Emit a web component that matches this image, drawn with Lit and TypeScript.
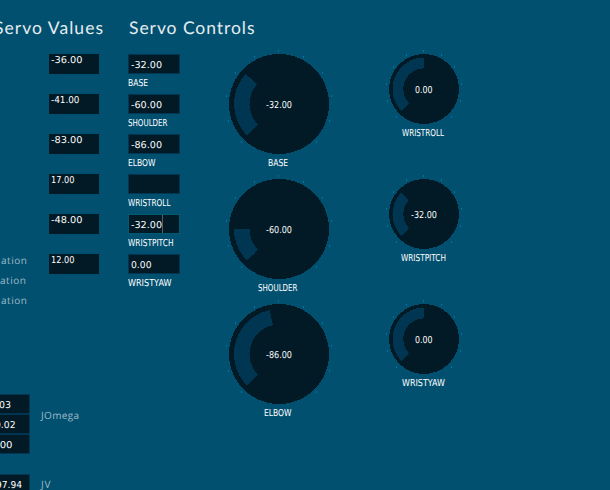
import { LitElement, html, css, svg } from "lit";
import { customElement, property } from "lit/decorators.js";

// A caption whose ink is fitted to a known width, like a fixed bitmap face.
@customElement("pixel-text")
class PixelText extends LitElement {
  @property() text = "";
  @property({ type: Number }) w = 20;
  @property() kind = "number";
  static styles = css`
    :host { display: block; height: 9px; flex: none; }
    svg { display: block; overflow: visible; height: 9px; }
    text { fill: #fff; font-family: "DejaVu Sans", sans-serif; font-size: 9.5px; text-rendering: geometricPrecision; }
    .caption { font-size: 9.6px; }
    .dialnum { font-size: 9.6px; }
    .title { fill: #e4edf1; font-family: Lato, sans-serif; font-size: 17.5px; }
    .note { fill: #9dbac7; font-family: "Open Sans", sans-serif; font-size: 10px; }
  `;
  render() {
    const glyphs = this.kind === "title" || this.kind === "note" ? "spacing" : "spacingAndGlyphs";
    return html`<svg width=${this.w} height="9">
      <text class=${this.kind} x="0" y="8" textLength=${this.w} lengthAdjust=${glyphs}>${this.text}</text>
    </svg>`;
  }
}

@customElement("servo-knob")
class ServoKnob extends LitElement {
  @property({ type: Number }) size = 100;
  @property({ type: Number }) value = 0;
  @property({ type: Number }) stop = 270;
  @property() label = "";
  @property({ type: Number }) lw = 20;
  static styles = css`
    :host { display: flex; flex-direction: column; align-items: center; height: 125px; }
    .dial { display: grid; place-items: center; flex: none; }
    .dial > * { grid-area: 1 / 1; }
    .dial svg { display: block; overflow: visible; }
    .face { fill: #021a25; }
    .arc { fill: #003652; }
    .tick { fill: #0572a0; }
    .value { margin: 0 1px 0 0; }
    .name { margin: 4px 2px 0 0; }
  `;
  render() {
    const r = this.size / 2;
    const point = (radius: number, deg: number) => {
      const a = (deg * Math.PI) / 180;
      return [r + radius * Math.cos(a), r + radius * Math.sin(a)];
    };
    const o = r * 0.9, i = r * 0.59;
    const d = `M${point(o, 135)} A${o} ${o} 0 0 1 ${point(o, this.stop)} L${point(i, this.stop)} A${i} ${i} 0 0 0 ${point(i, 135)}Z`;
    return html`
      <div class="dial">
        <svg width=${this.size} height=${this.size} shape-rendering="crispEdges">
          ${Array.from({ length: 11 }, (_, n) => {
            const [x, y] = point(r + 3.3, 135 + n * 27);
            return svg`<rect class="tick" x=${Math.round(x - 0.5)} y=${Math.round(y - 0.5)} width="1" height="2"/>`;
          })}
          <circle class="face" cx=${r} cy=${r} r=${r}/>
          <path class="arc" d=${d}/>
        </svg>
        <pixel-text class="value" kind="dialnum" text=${this.value.toFixed(2)} w=${this.value < 0 ? 26 : 17.5}></pixel-text>
      </div>
      <pixel-text class="name" kind="caption" text=${this.label} w=${this.lw}></pixel-text>`;
  }
}

@customElement("app-root")
class AppRoot extends LitElement {
  static styles = css`
    :host { display: block; width: 610px; height: 490px; overflow: hidden; background: #02506f; }
    .page { display: grid; grid-template-columns: 49px 79px 101px 155px 226px; height: 490px; overflow: hidden; }
    .side { padding-top: 256px; box-sizing: border-box; width: 100px; }
    .hint { height: 20px; padding-left: 1px; }
    .hint.b { padding-left: 0; }
    .group { display: flex; align-items: flex-start; gap: 11px; }
    .omega { margin-top: 78px; }
    .jv { margin-top: 20px; }
    .note { margin-top: 17px; }
    .jv .note { margin-top: 6px; }
    .out { box-sizing: border-box; width: 29.5px; height: 20px; border: 1px solid #003652; border-left: 0; background: #021a25; display: flex; justify-content: flex-end; padding-top: 5px; }
    .p19 { padding-right: 18px; } .p14 { padding-right: 13px; }
    .p17 { padding-right: 16px; } .p8 { padding-right: 7px; }
    .title { height: 54px; box-sizing: border-box; padding-top: 26px; }
    .title.v { margin-left: -55px; }
    .title.c { margin-left: 0.5px; }
    .read { width: 50px; height: 20px; margin-bottom: 20px; background: #021a25; padding: 1px 0 0 1.5px; box-sizing: border-box; }
    .cell { height: 40px; }
    .field { width: 52px; height: 20px; box-sizing: border-box; border: 1px solid #003652; background: #021a25; padding: 5px 0 0 1.5px; display: flex; }
    .field.on { border-color: #005a74; }
    .caret { width: 1px; height: 18px; margin: -5px 0 0 0.5px; background: #535f65; }
    .tag { margin: 4px 0 0 0; }
    .knobs { padding-top: 54px; }
    .big { width: 100px; }
    .small { width: 80px; }
  `;
  render() {
    const reads: [string, number][] = [["-36.00", 31.5], ["-41.00", 28.5], ["-83.00", 31.5], ["17.00", 23.5], ["-48.00", 31.5], ["12.00", 23.5]];
    const fields: [string, number, string, number][] = [
      ["-32.00", 31, "BASE", 20], ["-60.00", 31, "SHOULDER", 39.5], ["-86.00", 31, "ELBOW", 27.5],
      ["", 0, "WRISTROLL", 42.5], ["-32.00", 31, "WRISTPITCH", 45.5], ["0.00", 20.5, "WRISTYAW", 43.5],
    ];
    const out = (t: string, w: number, c: string) => html`<div class="out ${c}"><pixel-text text=${t} w=${w}></pixel-text></div>`;
    return html`<div class="page">
      <div class="side">
        <pixel-text class="hint" kind="note" text="ation" w="26"></pixel-text>
        <pixel-text class="hint b" kind="note" text="ation" w="26"></pixel-text>
        <pixel-text class="hint" kind="note" text="ation" w="26"></pixel-text>
        <div class="group omega">
          <div>${out("0.03", 21, "p19")}${out("0.02", 20.5, "p14")}${out("0.00", 22.5, "p17")}</div>
          <pixel-text class="note" kind="note" text="JOmega" w="38"></pixel-text>
        </div>
        <div class="group jv">
          ${out("97.94", 26, "p8")}
          <pixel-text class="note" kind="note" text="JV" w="9.5"></pixel-text>
        </div>
      </div>
      <div>
        <div class="title v"><pixel-text kind="title" text="Servo Values" w="109"></pixel-text></div>
        ${reads.map(([t, w]) => html`<div class="read"><pixel-text text=${t} w=${w}></pixel-text></div>`)}
      </div>
      <div>
        <div class="title c"><pixel-text kind="title" text="Servo Controls" w="125.5"></pixel-text></div>
        ${fields.map(([t, w, l, lw], n) => html`<div class="cell">
          <div class="field ${n === 4 ? "on" : ""}">
            ${t ? html`<pixel-text text=${t} w=${w}></pixel-text>` : ""}
            ${n === 4 ? html`<div class="caret"></div>` : ""}
          </div>
          <pixel-text class="tag" kind="caption" text=${l} w=${lw}></pixel-text>
        </div>`)}
      </div>
      <div class="knobs big">
        <servo-knob size="100" value="-32" stop="222" label="BASE" lw="20"></servo-knob>
        <servo-knob size="100" value="-60" stop="180" label="SHOULDER" lw="39.5"></servo-knob>
        <servo-knob size="100" value="-86" stop="258" label="ELBOW" lw="27.5"></servo-knob>
      </div>
      <div class="knobs small">
        <servo-knob size="70" value="0" label="WRISTROLL" lw="42"></servo-knob>
        <servo-knob size="70" value="-32" stop="223" label="WRISTPITCH" lw="45"></servo-knob>
        <servo-knob size="70" value="0" label="WRISTYAW" lw="43"></servo-knob>
      </div>
    </div>`;
  }
}
